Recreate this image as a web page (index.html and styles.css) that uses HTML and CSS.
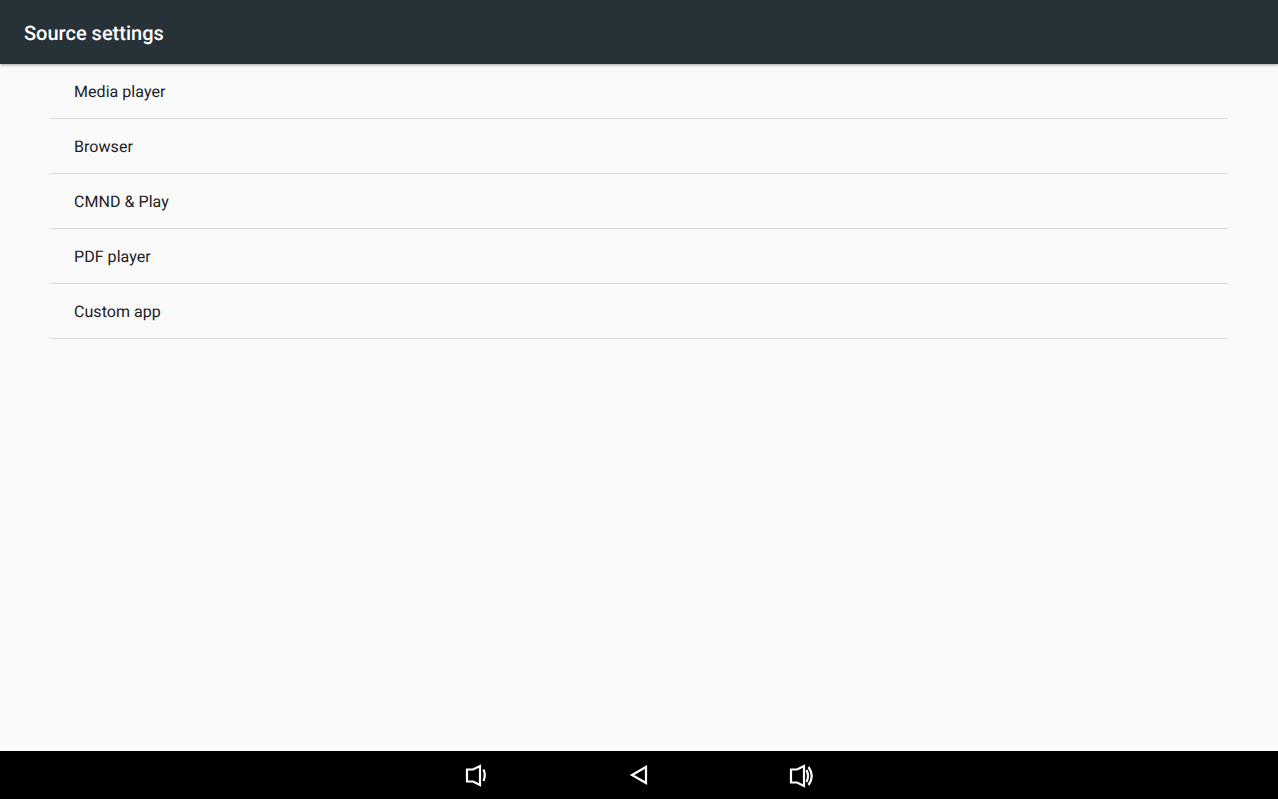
FILE: index.html
```html
<!DOCTYPE html>
<html lang="en">
<head>
    <meta charset="UTF-8">
    <meta name="viewport" content="width=device-width, initial-scale=1.0">
    <title>Source settings</title>
    <link rel="stylesheet" href="styles.css">
</head>
<body>
    <div class="toolbar">
        <h1>Source settings</h1>
    </div>

    <ul class="source-list">
        <li>Media player</li>
        <li>Browser</li>
        <li>CMND &amp; Play</li>
        <li>PDF player</li>
        <li>Custom app</li>
    </ul>

    <div class="nav-bar">
        <!-- volume down -->
        <svg class="nav-icon vol-down" width="24" height="26" viewBox="0 0 24 26">
            <path d="M3 7.500H9L16 4V23L9 19.500H3Z" />
            <path d="M19.500 7.500Q22 13 19.500 19" />
        </svg>
        <!-- back -->
        <svg class="nav-icon back" width="20" height="22" viewBox="0 0 20 22">
            <path d="M17 3V19L3 11Z" />
        </svg>
        <!-- volume up -->
        <svg class="nav-icon vol-up" width="26" height="26" viewBox="0 0 26 26">
            <path d="M3 7.500H9L16 4V24L9 20.500H3Z" />
            <path d="M18.500 8Q21.500 14 18.500 20" />
            <path d="M20.500 5Q27 14 20.500 23" />
        </svg>
    </div>
</body>
</html>
```

FILE: styles.css
```css
* {
    margin: 0;
    padding: 0;
    box-sizing: border-box;
}

html, body {
    height: 100%;
}

body {
    font-family: Roboto, "Liberation Sans", sans-serif;
    background: #fafafa;
    display: flex;
    flex-direction: column;
    overflow: hidden;
    text-rendering: geometricPrecision;
}

.toolbar {
    height: 64px;
    flex-shrink: 0;
    background: #263238;
    display: flex;
    align-items: center;
    padding: 2px 24px 0;
    box-shadow: 0 1px 3px rgba(0, 0, 0, 0.35);
}

.toolbar h1 {
    color: #ffffff;
    font-size: 20px;
    font-weight: 500;
}

.source-list {
    flex: 1;
    list-style: none;
    margin: 0 50px;
}

.source-list li {
    height: 55px;
    display: flex;
    align-items: center;
    padding-left: 24px;
    color: #212121;
    font-size: 16px;
    letter-spacing: 0.05px;
    border-bottom: 1px solid #dcdcdc;
}

.nav-bar {
    height: 48px;
    flex-shrink: 0;
    background: #000000;
    display: flex;
    align-items: center;
    justify-content: center;
}

.nav-icon {
    fill: none;
    stroke: #ffffff;
    stroke-width: 2.2;
}

.vol-down {
    margin-right: 141px;
}

.vol-up {
    margin-left: 139px;
}
```
